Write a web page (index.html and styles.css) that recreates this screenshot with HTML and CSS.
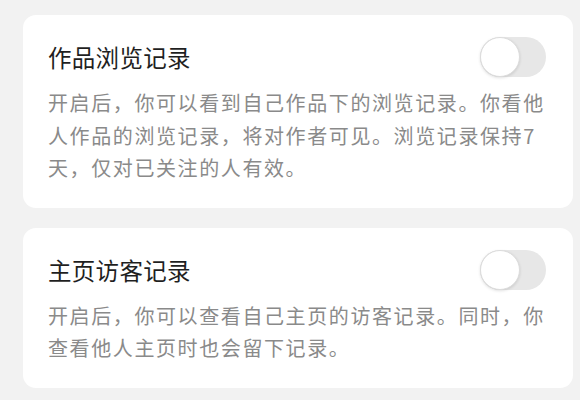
FILE: index.html
```html
<!DOCTYPE html>
<html lang="zh-CN">
<head>
<meta charset="utf-8">
<link rel="stylesheet" href="styles.css">
</head>
<body>
<div class="page">
  <section class="card">
    <div class="row">
      <h2 class="title">作品浏览记录</h2>
      <span class="toggle"><span class="knob"></span></span>
    </div>
    <p class="desc">开启后，你可以看到自己作品下的浏览记录。你看他<br>人作品的浏览记录，将对作者可见。浏览记录保持7<br>天，仅对已关注的人有效。</p>
  </section>
  <section class="card">
    <div class="row">
      <h2 class="title">主页访客记录</h2>
      <span class="toggle"><span class="knob"></span></span>
    </div>
    <p class="desc">开启后，你可以查看自己主页的访客记录。同时，你<br>查看他人主页时也会留下记录。</p>
  </section>
</div>
</body>
</html>
```
FILE: styles.css
```css
html, body {
  margin: 0;
  padding: 0;
  background: #f2f2f2;
  font-family: "Noto Sans CJK SC", "Noto Sans", sans-serif;
}
.page {
  width: 580px;
  height: 400px;
  box-sizing: border-box;
  padding: 15px 7px 0 23px;
  display: flex;
  flex-direction: column;
  gap: 20px;
}
.card {
  background: #ffffff;
  border-radius: 13px;
  padding: 22px 27px 23px 25px;
}
.row {
  display: flex;
  align-items: center;
  justify-content: space-between;
  height: 40px;
}
.title {
  margin: 0;
  font-size: 23.5px;
  font-weight: 400;
  color: #1f1f1f;
  letter-spacing: 0.3px;
  line-height: 30px;
}
.toggle {
  width: 66px;
  height: 40px;
  border-radius: 20px;
  background: #e7e7e7;
  position: relative;
  flex: none;
}
.knob {
  position: absolute;
  left: 0;
  top: 0;
  width: 38px;
  height: 38px;
  border-radius: 50%;
  background: #ffffff;
  border: 1px solid #dcdcdc;
  box-shadow: 0 1px 3px rgba(0,0,0,0.12);
}
.desc {
  margin: 10px 0 0;
  font-size: 20px;
  line-height: 32.5px;
  letter-spacing: 1.6px;
  color: #8a8a8a;
  white-space: nowrap;
}
```
